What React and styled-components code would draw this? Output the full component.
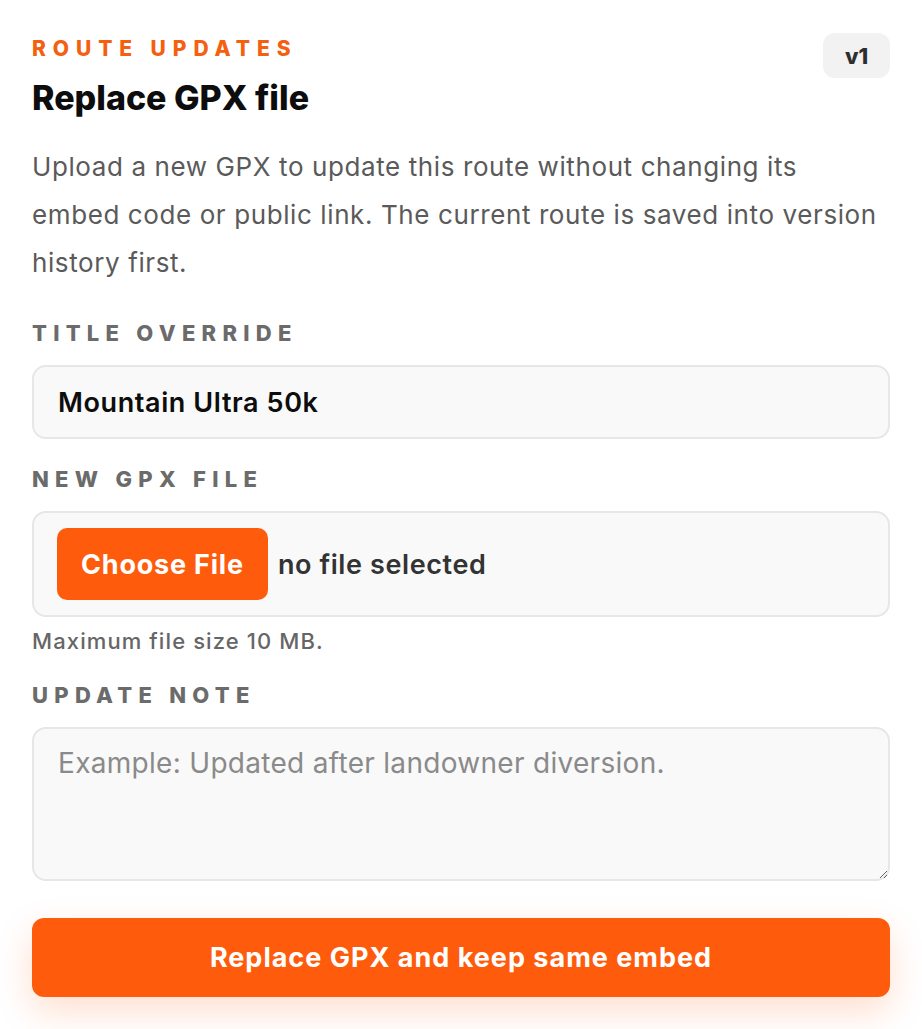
import React from "react";
import styled, { createGlobalStyle } from "styled-components";

const GlobalStyle = createGlobalStyle`
  * { box-sizing: border-box; }
  html, body { margin: 0; padding: 0; background: #ffffff; }
  body {
    font-family: Inter, "Noto Sans", "Liberation Sans", sans-serif;
    -webkit-font-smoothing: antialiased;
  }
`;

const ORANGE = "#ff5b0c";
const FONT = `Inter, "Noto Sans", "Liberation Sans", sans-serif`;

const Card = styled.section`
  width: 922px;
  min-height: 1029px;
  padding: 33px 32px 0 32px;
  background: #ffffff;
`;

const Header = styled.header`
  display: flex;
  justify-content: space-between;
  align-items: flex-start;
`;

const TitleBlock = styled.div`
  display: flex;
  flex-direction: column;
`;

const Eyebrow = styled.div`
  margin-top: 4px;
  font-size: 21px;
  line-height: 24px;
  font-weight: 800;
  letter-spacing: 0.33em;
  color: #f4600f;
  text-transform: uppercase;
`;

const Heading = styled.h1`
  margin: 17px 0 0;
  font-size: 34px;
  line-height: 40px;
  font-weight: 800;
  letter-spacing: 0;
  color: #0d0d0d;
`;

const Badge = styled.span`
  display: inline-flex;
  align-items: center;
  justify-content: center;
  width: 67px;
  height: 45px;
  border-radius: 12px;
  background: #f2f2f2;
  color: #2e2e2e;
  font-size: 22px;
  font-weight: 800;
`;

const Description = styled.p`
  max-width: 850px;
  margin: 25px 0 0;
  font-size: 26px;
  line-height: 48px;
  font-weight: 400;
  letter-spacing: 0.6px;
  color: #5a5a5a;
`;

const Form = styled.form`
  display: flex;
  flex-direction: column;
  gap: 26px;
  margin-top: 32px;
`;

const Field = styled.div`
  display: flex;
  flex-direction: column;
`;

const Label = styled.label`
  display: block;
  margin-bottom: 18px;
  font-size: 22px;
  line-height: 28px;
  font-weight: 800;
  letter-spacing: 0.285em;
  color: #6b6b6b;
  text-transform: uppercase;
`;

const controlBase = `
  width: 100%;
  border: 2px solid #e7e7e7;
  border-radius: 14px;
  background: #f9f9f9;
  font-family: ${FONT};
`;

const TextInput = styled.input`
  ${controlBase}
  height: 74px;
  padding: 0 24px;
  font-size: 27px;
  font-weight: 600;
  letter-spacing: 0.6px;
  color: #0d0d0d;
  outline: none;
`;

const FileBox = styled.div`
  ${controlBase}
  display: flex;
  align-items: center;
  gap: 10px;
  height: 106px;
  padding: 0 23px;
`;

const FileButton = styled.span`
  display: inline-flex;
  align-items: center;
  justify-content: center;
  height: 72px;
  padding: 0 24px;
  border-radius: 10px;
  background: ${ORANGE};
  color: #ffffff;
  font-size: 27px;
  font-weight: 700;
  letter-spacing: 0.8px;
`;

const FileName = styled.span`
  font-size: 27px;
  font-weight: 600;
  letter-spacing: 0.6px;
  color: #333333;
`;

const Hint = styled.p`
  margin: 10px 0 0;
  font-size: 22px;
  line-height: 28px;
  font-weight: 500;
  letter-spacing: 1.1px;
  color: #666666;
`;

const TextArea = styled.textarea`
  ${controlBase}
  display: block;
  height: 154px;
  padding: 14px 24px;
  font-size: 28px;
  line-height: 40px;
  letter-spacing: 0.3px;
  color: #0d0d0d;
  resize: vertical;
  outline: none;
  &::placeholder { color: #8a8a8a; }
`;

const SubmitButton = styled.button`
  width: 100%;
  height: 79px;
  margin-top: 11px;
  border: none;
  border-radius: 12px;
  background: ${ORANGE};
  color: #ffffff;
  font-family: ${FONT};
  font-size: 27px;
  font-weight: 700;
  letter-spacing: 1px;
  box-shadow: 0 14px 36px rgba(255, 91, 12, 0.2);
  cursor: pointer;
`;

export default function App() {
  return (
    <>
      <GlobalStyle />
      <Card>
        <Header>
          <TitleBlock>
            <Eyebrow>Route updates</Eyebrow>
            <Heading>Replace GPX file</Heading>
          </TitleBlock>
          <Badge>v1</Badge>
        </Header>
        <Description>
          Upload a new GPX to update this route without changing its embed code or public link. The current route is saved into version history first.
        </Description>
        <Form onSubmit={(e) => e.preventDefault()}>
          <Field>
            <Label htmlFor="title">Title override</Label>
            <TextInput id="title" defaultValue="Mountain Ultra 50k" />
          </Field>
          <Field>
            <Label>New GPX file</Label>
            <FileBox>
              <FileButton>Choose File</FileButton>
              <FileName>no file selected</FileName>
            </FileBox>
            <Hint>Maximum file size 10 MB.</Hint>
          </Field>
          <Field>
            <Label htmlFor="note">Update note</Label>
            <TextArea id="note" placeholder="Example: Updated after landowner diversion." />
          </Field>
          <SubmitButton type="submit">Replace GPX and keep same embed</SubmitButton>
        </Form>
      </Card>
    </>
  );
}
